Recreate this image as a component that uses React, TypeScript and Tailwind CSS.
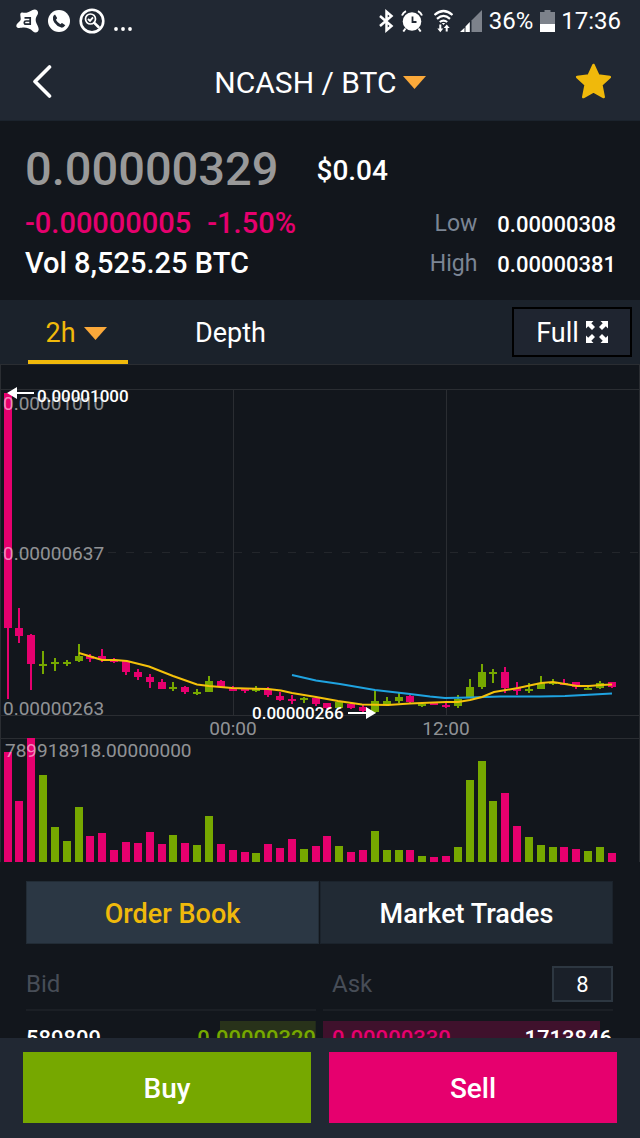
import React from "react";

const UP = "#76a800";
const DOWN = "#e6006e";
const CHART_TOP = 364;
const VOLUME_BASE = 862;

type Candle = {
  up: boolean;
  high: number;
  low: number;
  top: number;
  bottom: number;
  volume: number;
};

const c = (
  side: "u" | "d",
  high: number,
  low: number,
  top: number,
  bottom: number,
  volume: number,
): Candle => ({ up: side === "u", high, low, top, bottom, volume });

const candles: Candle[] = [
  c("d", 393, 699, 393, 628, 752),
  c("d", 608, 643, 628, 636, 801),
  c("d", 634, 690, 635, 664, 738),
  c("u", 651, 674, 664, 666, 775),
  c("u", 658, 671, 662, 664, 827),
  c("u", 660, 666, 662, 664, 841),
  c("u", 644, 662, 656, 661, 807),
  c("d", 654, 662, 656, 659, 836),
  c("d", 649, 662, 656, 660, 833),
  c("d", 658, 663, 660, 662, 850),
  c("d", 660, 675, 661, 672, 842),
  c("d", 669, 680, 672, 677, 843),
  c("d", 674, 688, 677, 682, 832),
  c("d", 679, 689, 682, 689, 844),
  c("u", 682, 691, 687, 689, 835),
  c("d", 686, 694, 687, 692, 843),
  c("u", 689, 695, 692, 694, 845),
  c("u", 676, 692, 681, 692, 816),
  c("d", 680, 688, 681, 687, 844),
  c("d", 686, 691, 688, 691, 850),
  c("d", 688, 693, 689, 691, 852),
  c("u", 686, 692, 688, 691, 853),
  c("d", 687, 697, 689, 695, 844),
  c("d", 692, 701, 696, 700, 848),
  c("d", 695, 704, 699, 701, 839),
  c("u", 697, 703, 698, 700, 849),
  c("d", 698, 706, 698, 704, 846),
  c("d", 703, 709, 703, 708, 836),
  c("u", 701, 708, 702, 708, 846),
  c("d", 703, 709, 704, 708, 852),
  c("d", 705, 713, 707, 711, 850),
  c("u", 690, 713, 701, 712, 831),
  c("u", 697, 705, 701, 704, 850),
  c("u", 693, 703, 697, 701, 850),
  c("d", 695, 703, 696, 702, 850),
  c("u", 702, 707, 704, 706, 856),
  c("d", 702, 705, 703, 705, 857),
  c("d", 702, 708, 705, 707, 856),
  c("u", 695, 708, 699, 706, 847),
  c("u", 679, 697, 687, 697, 780),
  c("u", 664, 689, 672, 687, 761),
  c("u", 669, 683, 672, 674, 801),
  c("d", 667, 693, 672, 688, 793),
  c("d", 682, 695, 688, 691, 826),
  c("u", 683, 693, 689, 691, 837),
  c("u", 676, 689, 683, 689, 845),
  c("u", 679, 685, 682, 684, 847),
  c("d", 679, 684, 683, 685, 847),
  c("d", 682, 689, 682, 687, 849),
  c("u", 686, 690, 688, 690, 851),
  c("u", 681, 689, 683, 688, 847),
  c("d", 682, 688, 682, 687, 853),
];

const shortAverage =
  "79,653 102,660 115,660 127,661 149,666.5 173,676 197,684.5 209,686 232,688 246,688.5 268,689 281,690.5 292,693 316,697 338,701 362,704.5 388,705 410,703.5 422,703 446,702 458,702 470,700 482,697 494,692 506,690 518,688 541,683 553,682 565,684 577,686 589,686 601,685 612,684.5";
const longAverage =
  "292,675 316,680.5 340,684 375,690 410,694 430,696.5 445,698 470,697.5 500,696.5 540,696.5 565,696 612,693.5";

function StatusBar() {
  return (
    <div className="flex h-[42px] items-center justify-between pl-4 pr-[19px] text-white">
      <div className="flex items-center gap-[9px]">
        <svg width="23" height="24" viewBox="0 0 23 24" aria-hidden="true">
          <path
            d="M4.500 4.500C5.500 2.300 8 4.200 10.500 3.800C13.500 3.300 16 .8 18.500 .6C21.700 .5 22.800 3.500 21.500 5.800C20 8.300 19.200 10 20 13C20.600 15.500 22.900 18 22.700 20.500C22.300 23.700 19 24.200 16.800 22.200C14.500 20 11 18.600 8 18.600C5.500 18.600 1.500 20 .5 17.800C-.5 15 3 13.500 4.300 11.500C5.500 9.500 3.700 6.500 4.500 4.500Z"
            fill="#fff"
          />
          <path
            d="M8.500 8.800H14.200V16M14.200 15.200H10Q8.300 15.200 8.300 13.500Q8.300 12 10 12H14"
            fill="none"
            stroke="#212833"
            strokeWidth="1.700"
          />
        </svg>
        <svg width="22" height="22" viewBox="0 0 22 22" aria-hidden="true">
          <circle cx="11" cy="11" r="11" fill="#fff" />
          <path
            d="M7 4.500L9 7.800Q9.300 8.400 8.600 9L7.900 9.700Q9.500 12.800 12.400 14.200L13.200 13.400Q13.800 12.900 14.400 13.200L17.300 15.200Q15.600 18 13.300 17.600Q9 16.500 6.300 12.500Q4.500 9.700 5 7Q5.400 5.200 7 4.500Z"
            fill="#212833"
          />
        </svg>
        <svg width="26" height="26" viewBox="0 0 26 26" aria-hidden="true">
          <circle cx="13" cy="13" r="11.300" fill="none" stroke="#fff" strokeWidth="2.600" />
          <circle cx="11.500" cy="11" r="5" fill="none" stroke="#fff" strokeWidth="1.700" />
          <path d="M15.300 14.800L19.500 19" stroke="#fff" strokeWidth="2.600" strokeLinecap="round" />
          <path d="M9 11L11 12.800L14 9.300" fill="none" stroke="#fff" strokeWidth="1.900" />
        </svg>
        <svg width="18" height="26" viewBox="0 0 18 26" aria-hidden="true">
          <g fill="#fff">
            <circle cx="2" cy="21" r="1.900" />
            <circle cx="9" cy="21" r="1.900" />
            <circle cx="16" cy="21" r="1.900" />
          </g>
        </svg>
      </div>
      <div className="flex items-center gap-[7px]">
        <svg width="16" height="24" viewBox="0 0 16 24" aria-hidden="true">
          <path
            d="M2 7L13.500 17L8.500 21.300V2.700L13.500 7L2 17"
            fill="none"
            stroke="#fff"
            strokeWidth="2.500"
            strokeLinejoin="miter"
          />
        </svg>
        <svg width="22" height="22" viewBox="0 0 22 22" aria-hidden="true">
          <circle cx="11" cy="11.500" r="9.300" fill="#fff" />
          <path
            d="M1 5.500Q2.200 2.500 5 1.200M21 5.500Q19.800 2.500 17 1.200M4.500 18.500L2.300 21.500M17.500 18.500L19.700 21.500"
            stroke="#fff"
            strokeWidth="2"
            fill="none"
          />
          <path d="M11.500 6.500V12H15.500" stroke="#212833" strokeWidth="1.800" fill="none" />
        </svg>
        <svg className="ml-1" width="19" height="24" viewBox="6 0 19 24" aria-hidden="true">
          <g fill="none" stroke="#fff" strokeWidth="2.200">
            <path d="M6.500 6Q15.500 -2 24.500 6" />
            <path d="M9 9.800Q15.500 4.100 22 9.800" />
            <path d="M11.800 13Q15.500 10.100 19.200 13" />
          </g>
          <path
            d="M13.800 14H17.200L15.500 16ZM11.300 15.500H13.300V19.500H15.300L12.300 23.200L9.300 19.500H11.300ZM17.700 22.500H19.700V19H21.700L18.700 15.500L15.700 19H17.700Z"
            fill="#fff"
          />
        </svg>
        <svg width="22" height="24" viewBox="0 0 22 24" aria-hidden="true">
          <path d="M11.500 11.500L22 1V23H11.500Z" fill="#7d828b" />
          <path d="M0 23L4.500 18.700V23ZM5.500 17.500L9.800 13V23H5.500Z" fill="#fff" />
        </svg>
        <span className="text-[24px] leading-6">36%</span>
        <div className="flex items-center gap-[6px]">
          <svg width="15" height="24" viewBox="0 0 15 24" aria-hidden="true">
            <path d="M4.500 1H10.500V3H15V15H0V3H4.500Z" fill="#7d828b" />
            <path d="M0 15H15V23H0Z" fill="#fff" />
          </svg>
          <span className="text-[24px] leading-6">17:36</span>
        </div>
      </div>
    </div>
  );
}

function Caret() {
  return (
    <svg width="23" height="13" viewBox="0 0 23 13" aria-hidden="true">
      <path d="M0 0H23L11.500 13Z" fill="#fba93a" />
    </svg>
  );
}

function Header() {
  return (
    <div className="grid h-[78px] grid-cols-[1fr_auto_1fr] items-center px-7">
      <button type="button" aria-label="Back" className="justify-self-start pl-1">
        <svg width="20" height="34" viewBox="0 0 20 34" aria-hidden="true">
          <path
            d="M17.500 3L3 17.500L17.500 32"
            fill="none"
            stroke="#fff"
            strokeWidth="3.600"
            strokeLinecap="round"
            strokeLinejoin="round"
          />
        </svg>
      </button>
      <button
        type="button"
        className="flex items-center gap-[6px] pt-[3px] text-[30px] leading-9 text-white"
      >
        NCASH / BTC
        <Caret />
      </button>
      <button type="button" aria-label="Favourite" className="justify-self-end">
        <svg width="38" height="38" viewBox="0 0 38 38" aria-hidden="true">
          <path
            d="M19.500 3L24.300 13.600L35.800 15L27.300 22.800L29.700 35L19.500 29.400L9.300 35L11.700 22.800L3.200 15L14.700 13.600Z"
            fill="#f0b90b"
            stroke="#f0b90b"
            strokeWidth="2.600"
            strokeLinejoin="round"
          />
        </svg>
      </button>
    </div>
  );
}

function Extreme({ label, value }: { label: string; value: string }) {
  return (
    <div className="flex items-center gap-5 pt-px text-[22px]">
      <span className="text-[23px] text-[#7b8594]">{label}</span>
      <span className="font-medium text-white">{value}</span>
    </div>
  );
}

function Summary() {
  return (
    <section className="flex flex-col pb-4 pl-[25px] pr-6 pt-5">
      <div className="mb-[7px] flex h-14 items-center gap-[38px]">
        <span className="text-[47px] font-medium leading-[56px] text-[#999999]">0.00000329</span>
        <span className="pt-1 text-[28px] font-medium text-white">$0.04</span>
      </div>
      <div className="flex h-10 items-center justify-between">
        <div className="flex gap-4 text-[29px] font-medium text-[#e6006e]">
          <span>-0.00000005</span>
          <span>-1.50%</span>
        </div>
        <Extreme label="Low" value="0.00000308" />
      </div>
      <div className="flex h-10 items-center justify-between">
        <span className="text-[29px] font-medium text-white">Vol 8,525.25 BTC</span>
        <Extreme label="High" value="0.00000381" />
      </div>
    </section>
  );
}

function ChartTabs() {
  return (
    <nav className="flex h-16 items-stretch bg-[#1b222b] pl-7 pr-2 text-[27px] text-white">
      <button
        type="button"
        className="flex w-[100px] items-center justify-center gap-2 border-b-4 border-[#f0b90b] pr-1 pt-[7px] text-[#f0b90b]"
      >
        2h
        <Caret />
      </button>
      <button type="button" className="ml-[67px] pt-[3px]">
        Depth
      </button>
      <button
        type="button"
        className="my-[7px] ml-auto flex w-[120px] items-center justify-center gap-[7px] border-2 border-black bg-[#1f2530] pt-[3px]"
      >
        Full
        <svg className="mb-[3px]" width="22" height="22" viewBox="0 0 22 22" aria-hidden="true">
          <g fill="#fff">
            <path d="M0 0H7.500L5.300 2.200L9 6L6 9L2.200 5.300L0 7.500Z" />
            <path d="M22 0H14.500L16.700 2.200L13 6L16 9L19.800 5.300L22 7.500Z" />
            <path d="M0 22H7.500L5.300 19.800L9 16L6 13L2.200 16.700L0 14.500Z" />
            <path d="M22 22H14.500L16.700 19.800L13 16L16 13L19.800 16.700L22 14.500Z" />
          </g>
        </svg>
      </button>
    </nav>
  );
}

function Chart() {
  return (
    <svg
      viewBox={`0 ${CHART_TOP} 640 ${VOLUME_BASE - CHART_TOP}`}
      className="block w-full"
      role="img"
      aria-label="NCASH / BTC price and volume, 2 hour candles"
    >
      <g stroke="#2a2d32" strokeWidth="1" fill="none">
        <path d="M0 364.500H640M0 389.500H640M0 715.500H640M0 738.500H640M.5 364V862M639.500 364V862M233.500 389V715M446.500 389V715" />
        <path d="M0 552.500H640" strokeDasharray="8 10" stroke="#23262b" />
      </g>
      {candles.map((k, i) => {
        const x = Math.round(7.5 + i * 11.85);
        const color = k.up ? UP : DOWN;
        return (
          <g key={i} fill={color} shapeRendering="crispEdges">
            <rect x={x - 1} y={k.high} width="2" height={k.low - k.high} />
            <rect x={x - 4} y={k.top} width="8" height={k.bottom - k.top} />
            <rect x={x - 4} y={k.volume} width="8" height={VOLUME_BASE - k.volume} />
          </g>
        );
      })}
      <polyline points={longAverage} fill="none" stroke="#1fa3e0" strokeWidth="2" />
      <polyline points={shortAverage} fill="none" stroke="#f5c20a" strokeWidth="2" />
      <g fill="#ffffff" fillOpacity="0.55" fontSize="19">
        <text x="3" y="410">0.00001010</text>
        <text x="3" y="560">0.00000637</text>
        <text x="3" y="715">0.00000263</text>
        <text x="5" y="757">789918918.00000000</text>
        <text x="233" y="735" textAnchor="middle">00:00</text>
        <text x="446" y="735" textAnchor="middle">12:00</text>
      </g>
      <g fill="#fff" fontSize="17" fontWeight="500">
        <text x="37" y="402">0.00001000</text>
        <text x="252" y="719">0.00000266</text>
        <path d="M7 393L17 387V392H34V394H17V399Z" />
        <path d="M376 713L366 707V712H348V714H366V719Z" />
      </g>
    </svg>
  );
}

function BookTabs() {
  return (
    <div className="mt-[19px] grid grid-cols-2 gap-px text-[27px] font-medium">
      <button
        type="button"
        className="h-[63px] border border-[#222c36] bg-[#2b3744] pt-[3px] text-[#f0b90b]"
      >
        Order Book
      </button>
      <button
        type="button"
        className="h-[63px] border border-[#1b232c] bg-[#212a34] pt-[3px] text-white"
      >
        Market Trades
      </button>
    </div>
  );
}

type SideProps = {
  title: string;
  control?: React.ReactNode;
  depth: string;
  left: React.ReactNode;
  right: React.ReactNode;
};

function BookSide({ title, control, depth, left, right }: SideProps) {
  const ask = control !== undefined;
  return (
    <table className="w-full text-[22px]">
      <thead>
        <tr className="h-[66px] border-b-2 border-[#1b1f25]">
          <th
            scope="col"
            className={`pt-[14px] text-left text-[24px] font-normal text-[#474d57] ${ask ? "pl-[9px]" : ""}`}
          >
            {title}
          </th>
          <th className="pt-[14px] text-right font-normal">{control}</th>
        </tr>
      </thead>
      <tbody className="font-medium before:block before:h-[10px]">
        <tr className="h-[35px]" style={{ backgroundImage: depth }}>
          <td className={ask ? "pl-[9px] text-[#e6006e]" : "text-white"}>{left}</td>
          <td className={ask ? "pr-px text-right text-white" : "text-right text-[#76a800]"}>
            {right}
          </td>
        </tr>
      </tbody>
    </table>
  );
}

const depthFill = (toward: "left" | "right", color: string, share: number) =>
  `linear-gradient(to ${toward}, ${color} ${share}%, transparent ${share}%)`;

function OrderBook() {
  return (
    <div className="grid grid-cols-2 items-start gap-[7px]">
      <BookSide
        title="Bid"
        depth={depthFill("left", "#28321a", 33)}
        left="589809"
        right="0.00000329"
      />
      <BookSide
        title="Ask"
        control={
          <select
            aria-label="Decimals"
            defaultValue="8"
            className="h-9 w-[61px] appearance-none rounded-none border-2 border-[#2d3741] bg-[#1a2029] text-center text-[22px] text-white [text-align-last:center]"
          >
            <option>8</option>
          </select>
        }
        depth={depthFill("right", "#3f112c", 95.5)}
        left="0.00000330"
        right="1713846"
      />
    </div>
  );
}

export default function App() {
  return (
    <div className="flex h-dvh flex-col overflow-hidden bg-[#12161c] font-['Roboto',sans-serif]">
      <header className="shrink-0 border-b border-[#1b232d] bg-[#212833]">
        <StatusBar />
        <Header />
      </header>
      <main className="min-h-0 flex-1 overflow-y-auto [scrollbar-width:none]">
        <Summary />
        <ChartTabs />
        <Chart />
        <section className="pl-[26px] pr-[27px]">
          <BookTabs />
          <OrderBook />
        </section>
      </main>
      <footer className="grid shrink-0 grid-cols-2 gap-[18px] bg-[#212833] px-[23px] pb-[15px] pt-[14px] text-[28px] font-medium text-white">
        <button type="button" className="h-[71px] bg-[#76a800] pt-[2px]">
          Buy
        </button>
        <button type="button" className="h-[71px] bg-[#e6006e] pt-[2px]">
          Sell
        </button>
      </footer>
    </div>
  );
}
